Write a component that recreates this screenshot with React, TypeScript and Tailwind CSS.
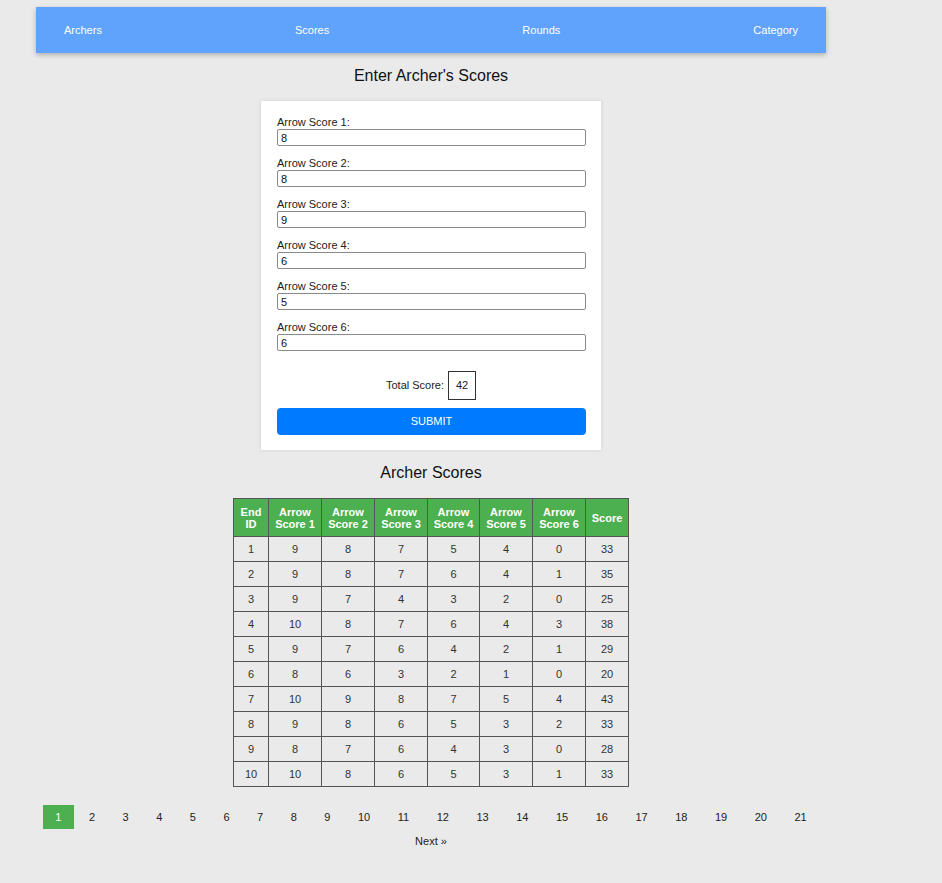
import React from "react";

const NAV = ["Archers", "Scores", "Rounds", "Category"];
const ARROWS = ["8", "8", "9", "6", "5", "6"];

const ROWS = [
  [1, 9, 8, 7, 5, 4, 0, 33],
  [2, 9, 8, 7, 6, 4, 1, 35],
  [3, 9, 7, 4, 3, 2, 0, 25],
  [4, 10, 8, 7, 6, 4, 3, 38],
  [5, 9, 7, 6, 4, 2, 1, 29],
  [6, 8, 6, 3, 2, 1, 0, 20],
  [7, 10, 9, 8, 7, 5, 4, 43],
  [8, 9, 8, 6, 5, 3, 2, 33],
  [9, 8, 7, 6, 4, 3, 0, 28],
  [10, 10, 8, 6, 5, 3, 1, 33],
];

const HEADERS = [
  ["End", "ID"],
  ["Arrow", "Score 1"],
  ["Arrow", "Score 2"],
  ["Arrow", "Score 3"],
  ["Arrow", "Score 4"],
  ["Arrow", "Score 5"],
  ["Arrow", "Score 6"],
  ["Score"],
];

const COL_W = ["w-[35px]", "w-[53px]", "w-[53px]", "w-[53px]", "w-[52px]", "w-[53px]", "w-[53px]", "w-[43px]"];

export default function App() {
  const pages = Array.from({ length: 21 }, (_, i) => i + 1);

  return (
    <div className="min-h-[883px] bg-[#eaeaea] pt-[7px] text-[11px] text-[#222] font-['Liberation_Sans',Arial,sans-serif]">
      <div className="ml-[36px] w-[790px]">
        <nav className="flex h-[46px] items-center justify-between bg-[#5fa3fc] px-[28px] text-[11px] text-white shadow-[0_2px_5px_rgba(0,0,0,0.25)]">
          {NAV.map((n) => (
            <a key={n} href="#" className="leading-[13px]">
              {n}
            </a>
          ))}
        </nav>

        <h2 className="mt-[14px] text-center text-[16px] leading-[18px] text-[#111]">Enter Archer's Scores</h2>

        <form className="mx-auto mt-[16px] w-[340px] bg-white px-[16px] pt-[15px] pb-[15px] shadow-[0_0_4px_rgba(0,0,0,0.12)]">
          {ARROWS.map((v, i) => (
            <div key={i} className="mb-[11px]">
              <label className="block leading-[13px]">Arrow Score {i + 1}:</label>
              <input
                readOnly
                value={v}
                className="block h-[17px] w-[309px] rounded-[2px] border border-[#8a8a8a] bg-white px-[3px] text-[11px] leading-[15px] text-[#111] outline-none"
              />
            </div>
          ))}
          <div className="mt-[20px] flex items-center justify-center gap-[4px]">
            <span>Total Score:</span>
            <span className="flex h-[29px] w-[28px] items-center justify-center border border-[#333]">42</span>
          </div>
          <button
            type="button"
            className="mt-[8px] block h-[27px] w-[309px] rounded-[4px] bg-[#007bff] text-[11px] text-white"
          >
            SUBMIT
          </button>
        </form>

        <h2 className="mt-[14px] text-center text-[16px] leading-[18px] text-[#111]">Archer Scores</h2>

        <table className="mx-auto mt-[16px] border-collapse text-center text-[11px] text-[#333]">
          <thead>
            <tr className="h-[38px] bg-[#4caf50] text-white">
              {HEADERS.map((h, i) => (
                <th key={i} className={`${COL_W[i]} border border-[#555] px-[2px] font-bold leading-[12px]`}>
                  {h.map((l, j) => (
                    <div key={j}>{l}</div>
                  ))}
                </th>
              ))}
            </tr>
          </thead>
          <tbody>
            {ROWS.map((r) => (
              <tr key={r[0]} className="h-[25px]">
                {r.map((c, i) => (
                  <td key={i} className="border border-[#555] leading-[12px]">
                    {c}
                  </td>
                ))}
              </tr>
            ))}
          </tbody>
        </table>

        <div className="mt-[18px] flex justify-center">
          {pages.map((p) => (
            <a
              key={p}
              href="#"
              className={`mx-[1.25px] flex h-[24px] items-center px-[12.5px] leading-[13px] ${
                p === 1 ? "bg-[#4caf50] text-white" : "text-[#222]"
              }`}
            >
              {p}
            </a>
          ))}
        </div>
        <div className="mt-[6px] text-center leading-[13px]">
          <a href="#">Next »</a>
        </div>
      </div>
    </div>
  );
}
